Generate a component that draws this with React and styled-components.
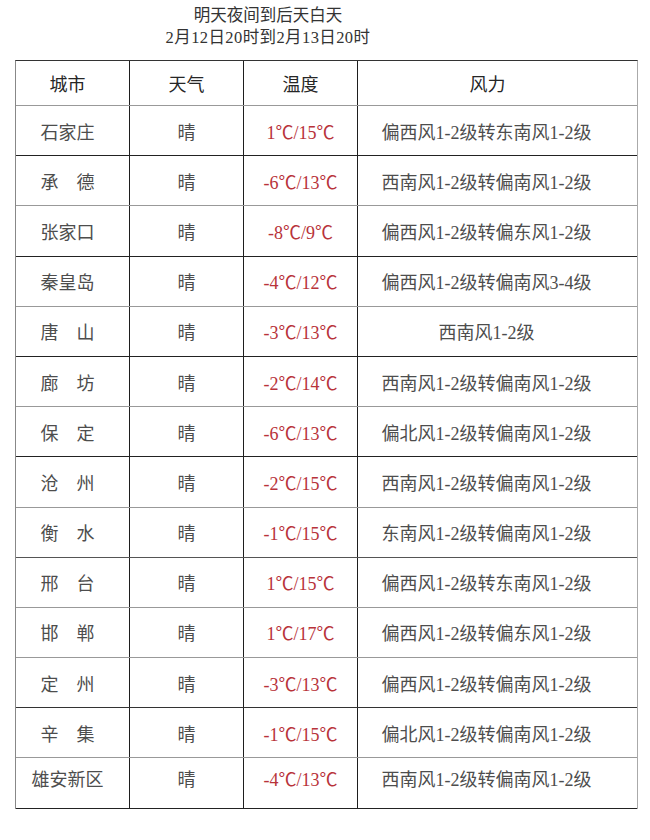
import styled, { createGlobalStyle } from "styled-components";

const GlobalStyle = createGlobalStyle`
  html, body {
    margin: 0;
    padding: 0;
    background: #fff;
  }
  body {
    font-family: "Liberation Serif", "Noto Sans CJK SC", serif;
    color: #4a4a4a;
  }
`;

const rows = [
  { city: "石家庄", temp: "1℃/15℃", wind: "偏西风1-2级转东南风1-2级", line: "#222" },
  { city: "承　德", temp: "-6℃/13℃", wind: "西南风1-2级转偏南风1-2级", line: "#999" },
  { city: "张家口", temp: "-8℃/9℃", wind: "偏西风1-2级转偏东风1-2级", line: "#222" },
  { city: "秦皇岛", temp: "-4℃/12℃", wind: "偏西风1-2级转偏南风3-4级", line: "#999" },
  { city: "唐　山", temp: "-3℃/13℃", wind: "西南风1-2级", line: "#222" },
  { city: "廊　坊", temp: "-2℃/14℃", wind: "西南风1-2级转偏南风1-2级", line: "#999" },
  { city: "保　定", temp: "-6℃/13℃", wind: "偏北风1-2级转偏南风1-2级", line: "#222" },
  { city: "沧　州", temp: "-2℃/15℃", wind: "西南风1-2级转偏南风1-2级", line: "#999" },
  { city: "衡　水", temp: "-1℃/15℃", wind: "东南风1-2级转偏南风1-2级", line: "#555" },
  { city: "邢　台", temp: "1℃/15℃", wind: "偏西风1-2级转东南风1-2级", line: "#999" },
  { city: "邯　郸", temp: "1℃/17℃", wind: "偏西风1-2级转偏东风1-2级", line: "#999" },
  { city: "定　州", temp: "-3℃/13℃", wind: "偏西风1-2级转偏南风1-2级", line: "#333" },
  { city: "辛　集", temp: "-1℃/15℃", wind: "偏北风1-2级转偏南风1-2级", line: "#999" },
  { city: "雄安新区", temp: "-4℃/13℃", wind: "西南风1-2级转偏南风1-2级", line: "#222" },
];

const Page = styled.div`
  width: 650px;
  height: 840px;
  padding-top: 5px;
  box-sizing: border-box;
`;

const Title = styled.div`
  padding-right: 114px;
  text-align: center;
  font-size: 16.5px;
  line-height: 22px;
  color: #333;
`;

const DateLine = styled.span`
  letter-spacing: 0.4px;
`;

const Table = styled.div`
  margin: 11px 0 0 15px;
  width: 623px;
  box-sizing: border-box;
  border-top: 1px solid #333;
  border-left: 1px solid #888;
  border-right: 1px solid #aaa;
`;

const Row = styled.div`
  display: grid;
  grid-template-columns: 114px 114px 114px 1fr;
  height: ${(p) => p.$h}px;
  box-sizing: border-box;
  border-bottom: 1px solid ${(p) => p.$line};
`;

const Cell = styled.div`
  display: flex;
  align-items: center;
  justify-content: center;
  box-sizing: border-box;
  border-right: ${(p) => (p.$last ? "none" : "1px solid #1e1e1e")};
  padding-right: ${(p) => p.$pr || 0}px;
  padding-bottom: ${(p) => p.$pb || 0}px;
  font-size: 18px;
  white-space: nowrap;
  color: ${(p) => (p.$head ? "#262626" : "#4d4d4d")};
`;

const Temp = styled.span`
  color: #b8333a;
`;

export default function App() {
  const last = rows.length - 1;
  return (
    <Page>
      <GlobalStyle />
      <Title>
        明天夜间到后天白天
        <br />
        <DateLine>2月12日20时到2月13日20时</DateLine>
      </Title>
      <Table>
        <Row $h={45} $line="#999">
          <Cell $head $pr={10}>城市</Cell>
          <Cell $head>天气</Cell>
          <Cell $head>温度</Cell>
          <Cell $head $last $pr={20}>风力</Cell>
        </Row>
        {rows.map((r, i) => (
          <Row key={r.city} $h={50.2} $line={r.line}>
            <Cell $pr={10} $pb={i === last ? 10 : 0}>{r.city}</Cell>
            <Cell $pb={i === last ? 10 : 0}>晴</Cell>
            <Cell $pb={i === last ? 10 : 0}>
              <Temp>{r.temp}</Temp>
            </Cell>
            <Cell $last $pr={22} $pb={i === last ? 10 : 0}>
              {r.wind}
            </Cell>
          </Row>
        ))}
      </Table>
    </Page>
  );
}
